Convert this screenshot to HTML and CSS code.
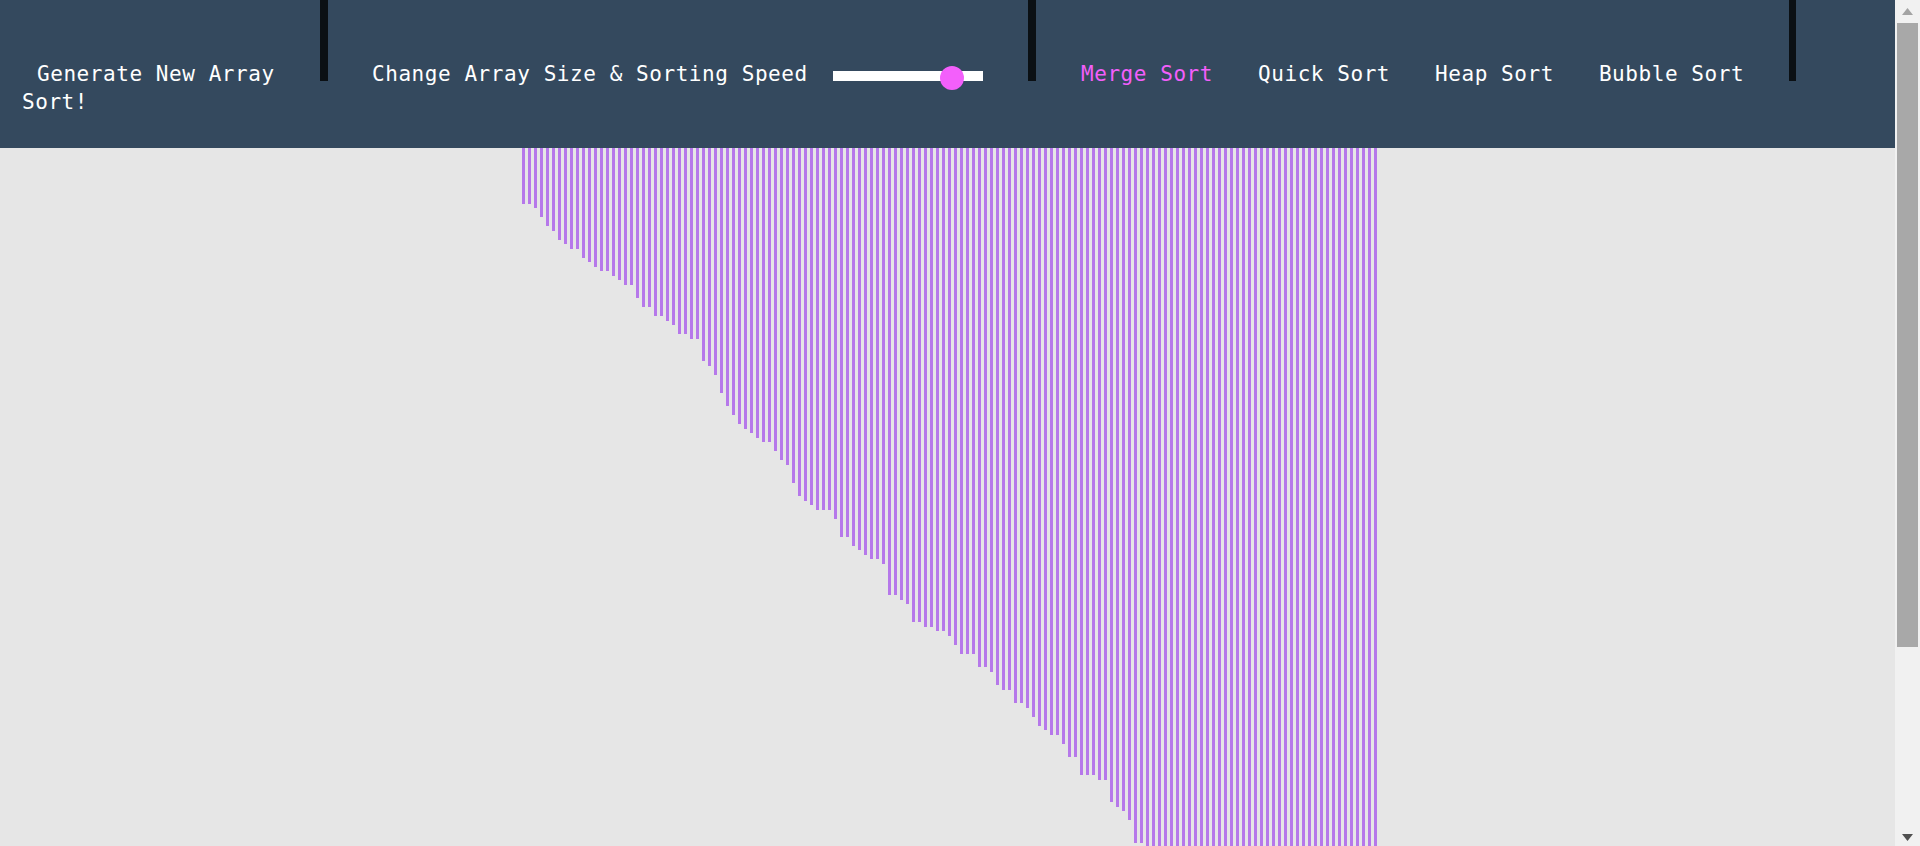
FILE: index.html
```html
<!DOCTYPE html>
<html lang="en">
<head>
  <meta charset="UTF-8">
  <title>Sorting Visualizer</title>
  <meta name="viewport" content="width=device-width, initial-scale=1.0">
  <link rel="stylesheet" href="styles.css">
</head>
<body>

  <header class="topbar">
    <div class="group group-left">
      <a href="#" class="link link-generate">Generate New Array</a>
      <a href="#" class="link link-sort">Sort!</a>
    </div>

    <div class="group group-middle">
      <label for="arraySize" class="link">Change Array Size &amp; Sorting Speed</label>
      <input type="range" id="arraySize" class="slider" min="0" max="100" value="85">
    </div>

    <div class="group group-right">
      <a href="#" class="link algo active">Merge Sort</a>
      <a href="#" class="link algo">Quick Sort</a>
      <a href="#" class="link algo">Heap Sort</a>
      <a href="#" class="link algo">Bubble Sort</a>
    </div>
  </header>

  <main id="bars" class="bars"></main>

  <div class="scrollbar">
    <svg class="scroll-arrow" width="11" height="7" viewBox="0 0 11 7"><path d="M5.5 0L11 7H0z" fill="#a3a3a3"/></svg>
    <div class="scroll-thumb"></div>
    <svg class="scroll-arrow scroll-arrow-down" width="11" height="7" viewBox="0 0 11 7"><path d="M0 0H11L5.5 7z" fill="#505050"/></svg>
  </div>

  <script src="script.js"></script>

</body>
</html>
```

FILE: styles.css
```css
html {
  background-color: #e6e6e6;
}

body {
  margin: 0 25px 0 0;
  background-color: #e6e6e6;
}

.topbar {
  display: flex;
  align-items: flex-start;
  height: 148px;
  background-color: #34495e;
  font-family: "DejaVu Sans Mono", "Liberation Mono", monospace;
  font-size: 21px;
  letter-spacing: 0.56px;
  line-height: 28px;
  color: #ffffff;
}

.link {
  color: #ffffff;
  text-decoration: none;
  white-space: nowrap;
}

.group {
  box-sizing: border-box;
  height: 81px;
  padding-top: 60px;
  border-right: 8px solid #0b1014;
}

.group-left {
  width: 328px;
  padding-left: 22px;
}

.link-generate {
  display: block;
  margin-left: 15px;
}

.link-sort {
  display: block;
}

.group-middle {
  display: flex;
  width: 708px;
  padding-left: 44px;
}

.slider {
  -webkit-appearance: none;
  appearance: none;
  width: 150px;
  height: 10px;
  margin: 11px 0 0 25px;
  background-color: #ffffff;
}

.slider::-webkit-slider-thumb {
  -webkit-appearance: none;
  width: 24px;
  height: 24px;
  margin-top: 4px;
  border-radius: 50%;
  background-color: #f35ffb;
}

.group-right {
  display: flex;
  width: 760px;
  padding-left: 22.5px;
  border-right-width: 7px;
}

.algo {
  padding: 0 22.5px;
}

.active {
  color: #f35ffb;
}

.bars {
  display: flex;
  align-items: flex-start;
  justify-content: center;
  gap: 3px;
  padding-left: 4px;
}

.bar {
  flex: none;
  width: 3px;
  background-color: #b678ea;
}

.scrollbar {
  position: fixed;
  top: 0;
  right: 0;
  bottom: 0;
  width: 25px;
  display: flex;
  flex-direction: column;
  align-items: center;
  background-color: #f1f1f1;
}

.scroll-arrow {
  flex: none;
  margin-top: 8px;
}

.scroll-arrow-down {
  margin-top: auto;
  margin-bottom: 5px;
}

.scroll-thumb {
  flex: none;
  width: 21px;
  height: 624px;
  margin-top: 8px;
  background-color: #a8a8a8;
}
```

FILE: script.js
```js
// bar heights of the array as it stands on screen
const heights = [
  56, 56, 60, 69, 78, 83, 92, 96, 101, 101, 110, 114, 119, 123, 123, 128, 132, 137, 137, 150,
  159, 159, 168, 168, 173, 177, 186, 186, 191, 191, 213, 218, 227, 245, 258, 267, 276, 281, 285, 290,
  294, 294, 303, 312, 317, 335, 348, 353, 357, 362, 362, 362, 371, 389, 389, 398, 402, 407, 411, 411,
  416, 447, 447, 452, 456, 474, 474, 479, 479, 483, 483, 488, 497, 506, 506, 506, 519, 519, 524, 537,
  542, 542, 555, 555, 560, 569, 578, 582, 587, 587, 596, 609, 609, 627, 627, 627, 632, 632, 654, 659,
  663, 672, 695, 695, 700, 704, 713, 717, 722, 730, 735, 744, 748, 753, 761, 766, 775, 779, 784, 792,
  797, 806, 810, 815, 823, 828, 832, 841, 846, 850, 859, 864, 868, 877, 881, 886, 895, 899, 908, 912,
  921, 928, 937
];

const barsDiv = document.getElementById('bars');

heights.forEach((h) => {
  const bar = document.createElement('div');
  bar.className = 'bar';
  bar.style.height = h + 'px';
  barsDiv.appendChild(bar);
});
```
